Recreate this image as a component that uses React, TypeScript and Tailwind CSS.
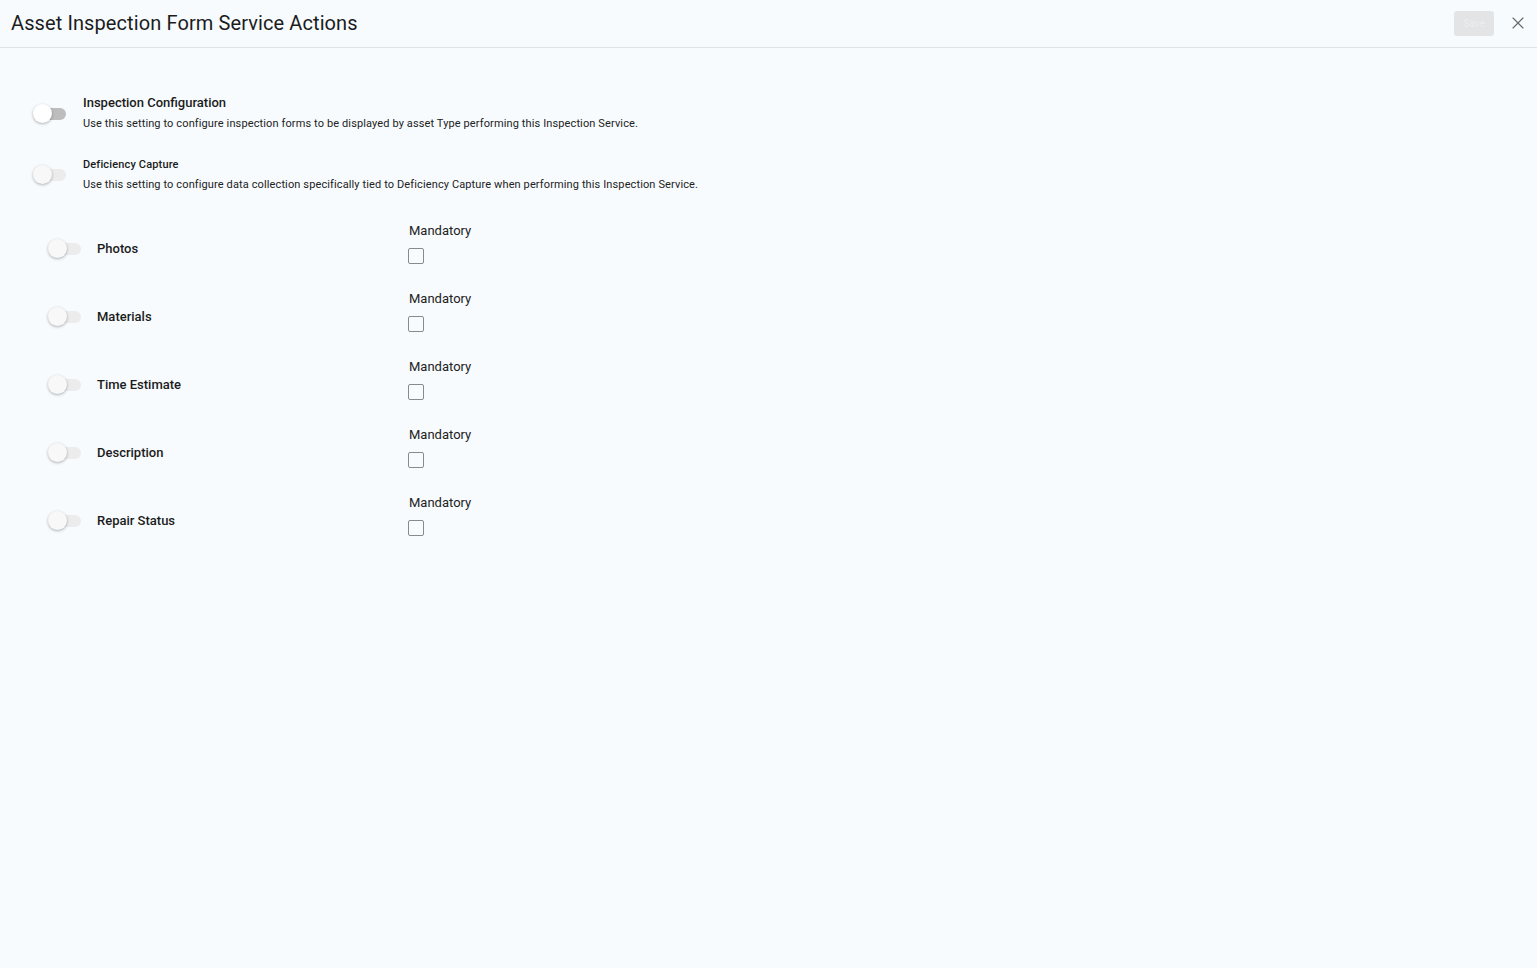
import { X } from "lucide-react";

const font = { fontFamily: "Roboto, 'Liberation Sans', sans-serif" };

function Switch({ disabled = false }: { disabled?: boolean }) {
  return (
    <div className="relative w-[33px] h-[19px] flex items-center shrink-0">
      <div
        className={`w-[31px] h-[12px] rounded-full ml-[2px] ${
          disabled ? "bg-[#ececec]" : "bg-[#bdbdbd]"
        }`}
      />
      <div
        className={`absolute left-0 top-0 w-[19px] h-[19px] rounded-full shadow-[0_1px_3px_rgba(0,0,0,0.3)] ${
          disabled ? "bg-[#f8f8f8]" : "bg-white"
        }`}
      />
    </div>
  );
}

const rows = ["Photos", "Materials", "Time Estimate", "Description", "Repair Status"];

export default function App() {
  return (
    <div className="min-h-[968px] bg-[#f7fbfe] text-[#1b1b1b]" style={font}>
      {/* Header */}
      <div className="h-[48px] flex items-center justify-between pl-[11px] pr-[9px] border-b border-[#dfe3e6]">
        <h1 className="text-[20px] leading-none tracking-[0.1px] text-[#1c1c1c] -mt-[1px]">
          Asset Inspection Form Service Actions
        </h1>
        <div className="flex items-center gap-[14px] -mt-[1px]">
          <button className="h-[25px] w-[40px] rounded-[3px] bg-[#e2e4e6] text-[10px] text-[#eeeeee]">
            Save
          </button>
          <X size={20} strokeWidth={1.4} className="text-[#6b6b6b]" />
        </div>
      </div>

      {/* Settings */}
      <div className="pl-[33px] pt-[46px]">
        <div className="flex gap-[17px]">
          <div className="pt-[10px]">
            <Switch />
          </div>
          <div>
            <div className="text-[13px] font-medium leading-[18px]">
              Inspection Configuration
            </div>
            <div className="text-[11px] tracking-[0.12px] leading-[14px] mt-[5px] text-[#222]">
              Use this setting to configure inspection forms to be displayed by asset Type performing this Inspection Service.
            </div>
          </div>
        </div>

        <div className="flex gap-[17px] mt-[26px]">
          <div className="pt-[8px]">
            <Switch disabled />
          </div>
          <div>
            <div className="text-[11px] tracking-[0.15px] font-medium leading-[16px]">
              Deficiency Capture
            </div>
            <div className="text-[11px] tracking-[0.12px] leading-[14px] mt-[5px] text-[#222]">
              Use this setting to configure data collection specifically tied to Deficiency Capture when performing this Inspection Service.
            </div>
          </div>
        </div>

        <div className="pl-[15px] pt-[31px] flex flex-col gap-[20px]">
          {rows.map((r) => (
            <div key={r} className="flex items-start h-[48px]">
              <div className="w-[361px] flex items-center gap-[16px] pt-[16px]">
                <Switch disabled />
                <span className="text-[13px] font-medium">{r}</span>
              </div>
              <div className="flex flex-col">
                <span className="text-[13px] leading-[16px] text-[#222]">Mandatory</span>
                <div className="mt-[9px] w-[16px] h-[16px] border-[1.5px] border-[#8a8a8a] rounded-[2px] -ml-[1px]" />
              </div>
            </div>
          ))}
        </div>
      </div>
    </div>
  );
}
